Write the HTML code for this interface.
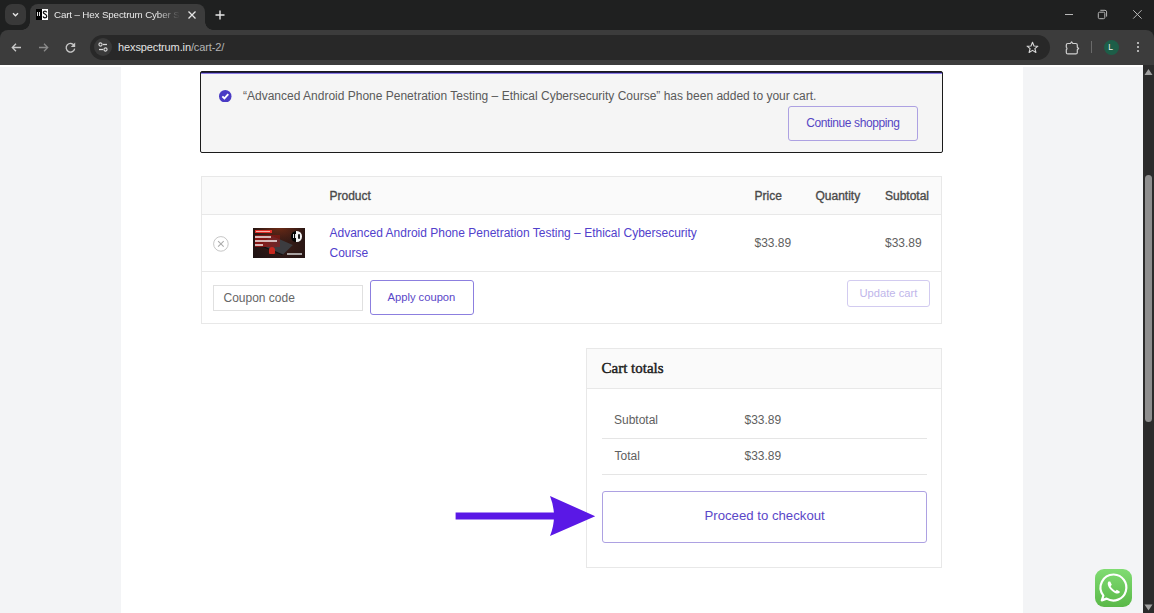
<!DOCTYPE html>
<html><head><meta charset="utf-8">
<style>
*{box-sizing:border-box;margin:0;padding:0}
html,body{width:1154px;height:613px;overflow:hidden;background:#f3f4f6;font-family:"Liberation Sans",sans-serif;position:relative}
.a{position:absolute}
.t{position:absolute;white-space:nowrap;line-height:1}
</style></head><body>
<!-- ===== Browser chrome ===== -->
<div class="a" style="left:0;top:0;width:1154px;height:65px;background:#1f2020"></div>
<div class="a" style="left:0;top:30px;width:1154px;height:35px;background:#3c3c3c;border-radius:8px 8px 0 0"></div>
<!-- dropdown btn -->
<div class="a" style="left:5px;top:4px;width:21px;height:21px;background:#393939;border-radius:7px"></div>
<svg class="a" style="left:10px;top:9px" width="11" height="11" viewBox="0 0 11 11"><path d="M3 4.2 L5.5 6.7 L8 4.2" fill="none" stroke="#e6e6e6" stroke-width="1.4"/></svg>
<!-- active tab -->
<div class="a" style="left:30px;top:4px;width:175px;height:27px;background:#3c3c3c;border-radius:8px 8px 0 0"></div>
<div class="a" style="left:22px;top:22px;width:8px;height:8px;background:radial-gradient(circle at 0 0,transparent 7.5px,#3c3c3c 8px)"></div>
<div class="a" style="left:205px;top:22px;width:8px;height:8px;background:radial-gradient(circle at 100% 0,transparent 7.5px,#3c3c3c 8px)"></div>
<!-- favicon -->
<div class="a" style="left:36px;top:9px;width:12px;height:11px;background:#fff"></div>
<div class="a" style="left:36px;top:9px;width:6px;height:11px;background:#000"></div>
<div class="a" style="left:37px;top:12px;width:1px;height:4px;background:#ddd"></div>
<div class="a" style="left:39px;top:12px;width:1px;height:4px;background:#ddd"></div>
<svg class="a" style="left:42px;top:9px" width="6" height="11" viewBox="0 0 6 11"><path d="M4.6 3.4 C4.4 2.4 3.6 2.1 3 2.1 C2 2.1 1.4 2.7 1.4 3.4 C1.4 5.2 4.7 4.9 4.7 7.2 C4.7 8.1 3.9 8.8 2.9 8.8 C2.1 8.8 1.3 8.4 1.2 7.4" fill="none" stroke="#111" stroke-width="1.3"/></svg>
<div class="t" style="left:54px;top:10.3px;font-size:9.8px;letter-spacing:-0.15px;color:#e8e8e8;width:126px;overflow:hidden;-webkit-mask-image:linear-gradient(90deg,#000 82%,transparent)">Cart – Hex Spectrum Cyber Security</div>
<svg class="a" style="left:186px;top:9px" width="12" height="12" viewBox="0 0 12 12"><path d="M2.5 2.5 L9.5 9.5 M9.5 2.5 L2.5 9.5" stroke="#e6e6e6" stroke-width="1.3"/></svg>
<svg class="a" style="left:214px;top:9px" width="12" height="12" viewBox="0 0 12 12"><path d="M6 1.5 V10.5 M1.5 6 H10.5" stroke="#e6e6e6" stroke-width="1.4"/></svg>
<!-- window controls -->
<div class="a" style="left:1065px;top:13.5px;width:8px;height:1.1px;background:#b8b8b8"></div>
<svg class="a" style="left:1097px;top:9px" width="11" height="11" viewBox="0 0 11 11"><rect x="1.3" y="3.2" width="6.5" height="6.5" rx="1.3" fill="none" stroke="#b8b8b8" stroke-width="1"/><path d="M3.3 1.3 H8 a1.6 1.6 0 0 1 1.6 1.6 V7.6" fill="none" stroke="#b8b8b8" stroke-width="1"/></svg>
<svg class="a" style="left:1132px;top:9px" width="11" height="11" viewBox="0 0 11 11"><path d="M1.2 1.2 L9.6 9.6 M9.6 1.2 L1.2 9.6" stroke="#b8b8b8" stroke-width="1"/></svg>
<!-- nav icons -->
<svg class="a" style="left:10px;top:41px" width="13" height="13" viewBox="0 0 13 13"><path d="M11 6.5 H2.5 M6 2.8 L2.3 6.5 L6 10.2" fill="none" stroke="#c8c8c8" stroke-width="1.3"/></svg>
<svg class="a" style="left:37px;top:41px" width="13" height="13" viewBox="0 0 13 13"><path d="M2 6.5 H10.5 M7 2.8 L10.7 6.5 L7 10.2" fill="none" stroke="#8a8a8a" stroke-width="1.3"/></svg>
<svg class="a" style="left:64px;top:41px" width="13" height="13" viewBox="0 0 13 13"><path d="M10.2 4.6 A4.3 4.3 0 1 0 10.7 7.6" fill="none" stroke="#c8c8c8" stroke-width="1.3"/><path d="M11.2 1.6 V6 H6.8 Z" fill="#c8c8c8"/></svg>
<!-- omnibox -->
<div class="a" style="left:90px;top:35px;width:960px;height:24.8px;background:#282828;border-radius:12.4px"></div>
<div class="a" style="left:94px;top:38.4px;width:18px;height:18px;background:#3a3a3a;border-radius:50%"></div>
<svg class="a" style="left:97px;top:41px" width="12" height="12" viewBox="0 0 12 12"><circle cx="3.5" cy="3.5" r="1.6" fill="none" stroke="#d8d8d8" stroke-width="1.1"/><path d="M6 3.5 H10" stroke="#d8d8d8" stroke-width="1.3"/><circle cx="8.5" cy="8.5" r="1.6" fill="none" stroke="#d8d8d8" stroke-width="1.1"/><path d="M2 8.5 H6" stroke="#d8d8d8" stroke-width="1.3"/></svg>
<div class="t" style="left:118px;top:42.2px;font-size:11px;letter-spacing:-0.12px;color:#e3e3e3">hexspectrum.in<span style="color:#b4b4b4">/cart-2/</span></div>
<!-- star -->
<svg class="a" style="left:1026px;top:41px" width="13" height="13" viewBox="0 0 13 13"><path d="M6.5 1.3 L8 5 L11.9 5.2 L8.9 7.7 L9.9 11.5 L6.5 9.4 L3.1 11.5 L4.1 7.7 L1.1 5.2 L5 5 Z" fill="none" stroke="#d8d8d8" stroke-width="1.1" stroke-linejoin="round"/></svg>
<!-- extensions -->
<svg class="a" style="left:1063.5px;top:39.6px" width="16" height="16" viewBox="0 0 16 16"><path d="M3.8 3.5 H6.4 L7.6 1.9 L8.8 3.5 H11.8 Q13.3 3.5 13.3 5 V7.3 L14.6 8.5 L13.3 9.7 V12.4 Q13.3 13.9 11.8 13.9 H3.8 Q2.3 13.9 2.3 12.4 V9.8 Q3.6 8.6 2.3 7.2 V5 Q2.3 3.5 3.8 3.5 Z" fill="none" stroke="#d0d0d0" stroke-width="1.2" stroke-linejoin="round"/></svg>
<div class="a" style="left:1091px;top:41px;width:1px;height:12px;background:#6a6a6a"></div>
<div class="a" style="left:1103.5px;top:39.5px;width:15px;height:15px;background:#1d5e48;border-radius:50%"></div>
<div class="t" style="left:1108.3px;top:42.8px;font-size:8.5px;color:#f0f0f0">L</div>
<div class="a" style="left:1137px;top:42px;width:2px;height:2px;background:#d8d8d8;border-radius:1px"></div>
<div class="a" style="left:1137px;top:46px;width:2px;height:2px;background:#d8d8d8;border-radius:1px"></div>
<div class="a" style="left:1137px;top:50px;width:2px;height:2px;background:#d8d8d8;border-radius:1px"></div>

<!-- ===== Page ===== -->
<div class="a" style="left:0;top:65px;width:1143px;height:2px;background:#fff"></div>
<div class="a" style="left:121px;top:67px;width:902px;height:546px;background:#fff"></div>
<!-- scrollbar -->
<div class="a" style="left:1143px;top:65px;width:11px;height:548px;background:#2b2b2b"></div>
<svg class="a" style="left:1143px;top:67px" width="11" height="10" viewBox="0 0 11 10"><path d="M1.5 8 L5.5 2 L9.5 8 Z" fill="#a0a0a0"/></svg>
<div class="a" style="left:1145px;top:175px;width:7px;height:247px;background:#8e8e8e;border-radius:4px"></div>
<svg class="a" style="left:1143px;top:602px" width="11" height="10" viewBox="0 0 11 10"><path d="M1.5 2.5 L5.5 8.5 L9.5 2.5 Z" fill="#a0a0a0"/></svg>

<!-- notice -->
<div class="a" style="left:200px;top:71px;width:743px;height:82px;background:#f5f5f5;border:1px solid #1b1b1b;border-radius:2px"></div>
<div class="a" style="left:201px;top:72px;width:741px;height:1px;background:#1e1a4a"></div>
<div class="a" style="left:201px;top:73px;width:741px;height:1px;background:#8c7de6"></div>
<svg class="a" style="left:219px;top:89.5px" width="12.5" height="12.5" viewBox="0 0 12 12"><circle cx="6" cy="6" r="6" fill="#4a3bc4"/><path d="M3.2 6.1 L5.2 8.1 L8.9 4" fill="none" stroke="#fff" stroke-width="1.8"/></svg>
<div class="t" style="left:243px;top:89.5px;font-size:12px;color:#5a5a5a">“Advanced Android Phone Penetration Testing – Ethical Cybersecurity Course” has been added to your cart.</div>
<div class="a" style="left:788px;top:105.5px;width:130px;height:35px;border:1px solid #ada1e2;border-radius:3px"></div>
<div class="t" style="left:806.3px;top:116.6px;font-size:12px;letter-spacing:-0.4px;color:#5545c4">Continue shopping</div>

<!-- cart table -->
<div class="a" style="left:201px;top:176px;width:741px;height:148px;border:1px solid #e8e8e8"></div>
<div class="a" style="left:202px;top:177px;width:739px;height:37px;background:#fafafa"></div>
<div class="a" style="left:202px;top:214px;width:739px;height:1px;background:#e8e8e8"></div>
<div class="a" style="left:202px;top:271px;width:739px;height:1px;background:#e8e8e8"></div>
<div class="t" style="left:329.5px;top:189.5px;font-size:12px;font-weight:400;-webkit-text-stroke:0.35px #4a4a4a;color:#4a4a4a">Product</div>
<div class="t" style="left:754.5px;top:189.5px;font-size:12px;font-weight:400;-webkit-text-stroke:0.35px #4a4a4a;color:#4a4a4a">Price</div>
<div class="t" style="left:815.5px;top:189.5px;font-size:12px;font-weight:400;-webkit-text-stroke:0.35px #4a4a4a;color:#4a4a4a">Quantity</div>
<div class="t" style="left:885px;top:189.5px;font-size:12px;font-weight:400;-webkit-text-stroke:0.35px #4a4a4a;color:#4a4a4a">Subtotal</div>
<svg class="a" style="left:213px;top:235.5px" width="16" height="16" viewBox="0 0 16 16"><circle cx="7.9" cy="7.9" r="7.3" fill="none" stroke="#c6c6c6" stroke-width="1"/><path d="M5.1 5.1 L10.7 10.7 M10.7 5.1 L5.1 10.7" stroke="#ababab" stroke-width="1.05"/></svg>
<!-- thumbnail -->
<div class="a" style="left:252.9px;top:227.9px;width:52px;height:29.7px;background:radial-gradient(ellipse 60% 50% at 50% 0%,#6a2a16 0%,transparent 100%),radial-gradient(ellipse at 60% 60%,#3a1c16 0%,#221414 70%,#161010 100%);overflow:hidden">
  <div class="a" style="left:9px;top:12px;width:30px;height:10px;background:#3c3c40;transform:skewX(-35deg) rotate(18deg);box-shadow:0 1px 0 #111"></div>
  <div class="a" style="left:2.2px;top:7.4px;width:24.6px;height:12px;background:linear-gradient(90deg,rgba(150,20,18,.9),rgba(150,20,18,.5))"></div>
  <div class="a" style="left:2.5px;top:2.5px;width:16.5px;height:2.6px;background:#e2302a"></div>
  <div class="a" style="left:3.5px;top:3.4px;width:14px;height:0.9px;background:#f3b0a8"></div>
  <div class="a" style="left:2.5px;top:8.6px;width:15.8px;height:2px;background:rgba(235,225,225,.8)"></div>
  <div class="a" style="left:2.5px;top:12.4px;width:21.5px;height:2.2px;background:rgba(235,225,225,.8)"></div>
  <div class="a" style="left:2.5px;top:16px;width:7.5px;height:2.2px;background:rgba(235,225,225,.8)"></div>
  <div class="a" style="left:16px;top:19px;width:6.5px;height:7px;background:#c8281e;border-radius:3px 3px 1px 1px"></div>
  <div class="a" style="left:38.3px;top:2.9px;width:10.8px;height:11.4px;border-radius:50%;background:linear-gradient(90deg,#050505 50%,#f4f4f4 50%)"></div>
  <div class="a" style="left:40.5px;top:6.5px;width:0.9px;height:4px;background:#ddd"></div>
  <div class="a" style="left:42.2px;top:6.5px;width:0.9px;height:4px;background:#ddd"></div>
  <div class="a" style="left:45px;top:6px;width:2.2px;height:5px;border-radius:1px;background:#222"></div>
  <div class="a" style="left:34.3px;top:25.1px;width:14.7px;height:1.7px;background:rgba(220,220,220,.7)"></div>
</div>
<div class="t" style="left:329.5px;top:226.5px;font-size:12px;color:#5141cc">Advanced Android Phone Penetration Testing – Ethical Cybersecurity</div>
<div class="t" style="left:329.5px;top:247.1px;font-size:12px;color:#5141cc">Course</div>
<div class="t" style="left:754.5px;top:236.5px;font-size:12px;color:#606060">$33.89</div>
<div class="t" style="left:885px;top:236.5px;font-size:12px;color:#606060">$33.89</div>
<!-- coupon -->
<div class="a" style="left:213px;top:284.5px;width:150px;height:26px;border:1px solid #e0e0e0"></div>
<div class="t" style="left:223.5px;top:292px;font-size:12px;color:#666">Coupon code</div>
<div class="a" style="left:370px;top:280px;width:103.5px;height:34.5px;border:1px solid #8c7fdf;border-radius:3px"></div>
<div class="t" style="left:387.5px;top:291.5px;font-size:11.2px;color:#5a47c8">Apply coupon</div>
<div class="a" style="left:847px;top:280px;width:82.5px;height:26.5px;border:1px solid #d2cbf0;border-radius:3px"></div>
<div class="t" style="left:859.5px;top:287.6px;font-size:11.2px;color:#c0b6ea">Update cart</div>

<!-- cart totals -->
<div class="a" style="left:586px;top:348px;width:356px;height:220px;border:1px solid #e8e8e8"></div>
<div class="a" style="left:587px;top:349px;width:354px;height:39px;background:#fafafa"></div>
<div class="a" style="left:587px;top:388px;width:354px;height:1px;background:#e8e8e8"></div>
<div class="t" style="left:601.5px;top:361px;font-family:'Liberation Serif',serif;font-size:15px;font-weight:400;-webkit-text-stroke:0.45px #1c1c1c;color:#1c1c1c">Cart totals</div>
<div class="t" style="left:614px;top:414px;font-size:12px;color:#606060">Subtotal</div>
<div class="t" style="left:744.5px;top:414px;font-size:12px;color:#606060">$33.89</div>
<div class="a" style="left:602px;top:438px;width:325px;height:1px;background:#e5e5e5"></div>
<div class="t" style="left:614.5px;top:450px;font-size:12px;color:#606060">Total</div>
<div class="t" style="left:744.5px;top:450px;font-size:12px;color:#606060">$33.89</div>
<div class="a" style="left:602px;top:473.5px;width:325px;height:1px;background:#e5e5e5"></div>
<div class="a" style="left:602px;top:491px;width:325px;height:51.5px;border:1px solid #ada1e2;border-radius:3px"></div>
<div class="t" style="left:704.5px;top:509.4px;font-size:13.2px;color:#5a47c8">Proceed to checkout</div>

<!-- arrow -->
<svg class="a" style="left:440px;top:480px" width="170" height="70" viewBox="0 0 170 70"><rect x="15.6" y="32.5" width="100" height="7" fill="#5a18e6"/><path d="M110 16 Q118 36 110 56 L155.2 36.2 Z" fill="#5a18e6"/></svg>

<!-- whatsapp -->
<div class="a" style="left:1095px;top:569px;width:37px;height:37.5px;border-radius:9px;background:linear-gradient(#80dc72,#5ab848)"></div>
<svg class="a" style="left:1095px;top:569px" width="37" height="37.5" viewBox="0 0 37 37.5"><path d="M18.8 5.5 A13 13 0 1 1 11.6 29.6 L6.8 31.4 L8.4 26.6 A13 13 0 0 1 18.8 5.5 Z" fill="none" stroke="#fff" stroke-width="2.2" stroke-linejoin="round"/><path d="M13.5 12.5 C12 14 12.8 17.5 16 21 C19.5 24.5 23 25.5 24.6 23.8 L24.8 22.5 L21.8 20.8 L20.5 22 C19 21.4 16.4 19 15.6 17.2 L16.8 15.8 L15.2 12.5 Z" fill="#fff"/></svg>
</body></html>
